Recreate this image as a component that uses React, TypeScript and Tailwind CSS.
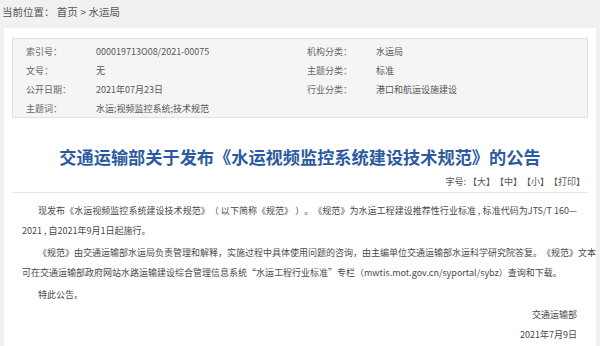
import React from 'react';

const font = { fontFamily: '"Noto Sans CJK SC", "Noto Sans", sans-serif' };

const infoRows: [string, string, string, string][] = [
  ['索引号：', '000019713O08/2021-00075', '机构分类：', '水运局'],
  ['文号：', '无', '主题分类：', '标准'],
  ['公开日期：', '2021年07月23日', '行业分类：', '港口和航运设施建设'],
  ['主题词：', '水运;视频监控系统;技术规范', '', ''],
];

const App: React.FC = () => {
  return (
    <div
      className="w-[600px] h-[346px] overflow-hidden bg-[#f1f1f1] text-[9px] text-[#555] [text-spacing-trim:space-all]"
      style={font}
    >
      {/* breadcrumb */}
      <div className="h-[28px] pl-[2px] pt-[5px] leading-[14px] text-[10.5px] text-[#555]">
        当前位置：&nbsp;首页 &gt; 水运局
      </div>

      <div className="mx-[4px] bg-white pt-[10px] h-[318px]">
        {/* meta box */}
        <div className="mx-[8px] h-[80px] border border-[#e2e2e2] bg-[#f5f5f5] pt-[3px] pl-[13px]">
          {infoRows.map(([l1, v1, l2, v2]) => (
            <div key={l1} className="flex h-[19px] items-center text-[#555]">
              <span className="w-[70px] text-[#666]">{l1}</span>
              <span className="w-[211px]">{v1}</span>
              <span className="w-[69px] text-[#666]">{l2}</span>
              <span>{v2}</span>
            </div>
          ))}
        </div>

        {/* title */}
        <h1 className="mt-[28px] text-center text-[17.2px] leading-[22px] font-bold text-[#2c5aa0]">
          交通运输部关于发布《水运视频监控系统建设技术规范》的公告
        </h1>

        <div className="mt-[7px] pr-[11px] text-right text-[9px] leading-[14px] text-[#555]">
          字号: 【大】【中】【小】【打印】
        </div>
        <div className="mx-[8px] mt-[3px] border-t border-[#e6e6e6]" />

        {/* body */}
        <div className="pl-[18px] pr-[19px] pt-[8px] leading-[20px] text-[#4a4a4a] whitespace-nowrap">
          <p className="mb-[2px]">
            <span className="block pl-[16px] text-justify [text-align-last:justify]">
              现发布《水运视频监控系统建设技术规范》（ 以下简称《规范》 ）。《规范》为水运工程建设推荐性行业标准 , 标准代码为JTS/T 160—
            </span>
            2021 , 自2021年9月1日起施行。
          </p>
          <p className="mb-[2px]">
            <span className="block pl-[16px] text-justify [text-align-last:justify]">
              《规范》由交通运输部水运局负责管理和解释，实施过程中具体使用问题的咨询，由主编单位交通运输部水运科学研究院答复。《规范》文本
            </span>
            可在交通运输部政府网站水路运输建设综合管理信息系统“水运工程行业标准”专栏（mwtis.mot.gov.cn/syportal/sybz）查询和下载。
          </p>
          <p className="pl-[16px]">特此公告。</p>
          <p className="text-right">交通运输部</p>
          <p className="text-right leading-[19px]">2021年7月9日</p>
        </div>
      </div>
    </div>
  );
};

export default App;
